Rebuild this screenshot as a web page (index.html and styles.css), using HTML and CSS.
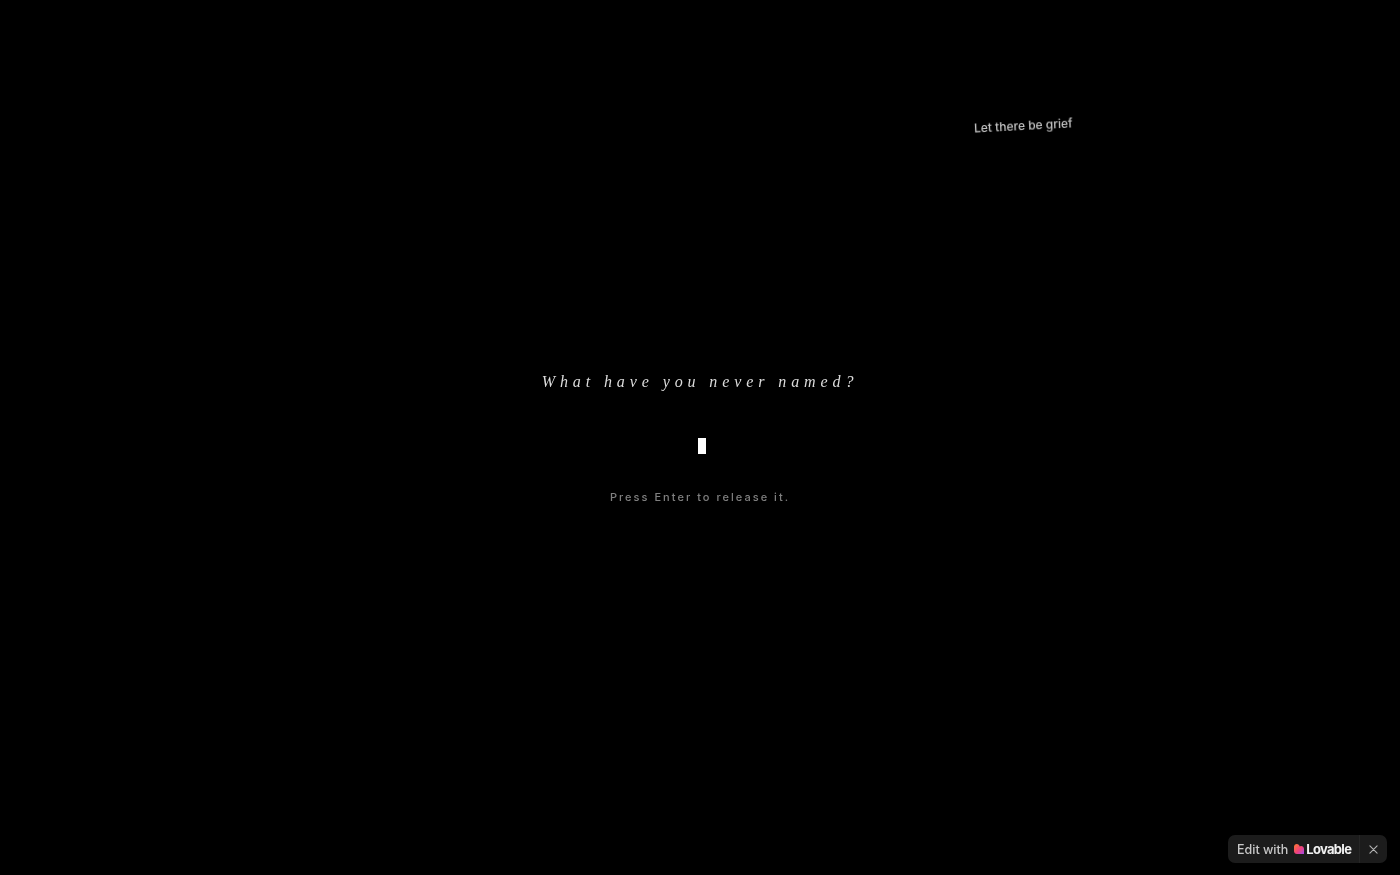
FILE: index.html
```html
<!DOCTYPE html>
<html>
<head>
  <meta name="viewport" content="width=device-width, initial-scale=1.0">
  <title>Let there be grief</title>
  <link rel="stylesheet" href="styles.css">
</head>
<body>
  <div class="floating-text">Let there be grief</div>

  <main class="prompt">
    <h1 class="prompt-question">What have you never named?</h1>
    <div class="prompt-input"><span class="cursor"></span></div>
    <p class="prompt-hint">Press Enter to release it.</p>
  </main>

  <div class="edit-badge">
    <a class="edit-link" href="#">
      <span class="edit-label">Edit with</span>
      <svg class="edit-logo" viewBox="0 0 12 12" width="10" height="10" aria-hidden="true">
        <defs>
          <linearGradient id="heart" x1="0" y1="0" x2="1" y2="1">
            <stop offset="0" stop-color="#ff7a2f"/>
            <stop offset="0.55" stop-color="#f0427a"/>
            <stop offset="1" stop-color="#a24be8"/>
          </linearGradient>
        </defs>
        <path fill="url(#heart)" d="M3.4 0C5.2 0 6.6 1.3 6.8 3.1 7.2 2.7 7.8 2.5 8.4 2.5 10.4 2.5 12 4.1 12 6.1V12H3.4C1.5 12 0 10.5 0 8.6V3.4C0 1.5 1.5 0 3.4 0Z"/>
      </svg>
      <span class="edit-brand">Lovable</span>
    </a>
    <button class="edit-close" type="button" aria-label="Close">
      <svg viewBox="0 0 10 10" width="9" height="9" aria-hidden="true">
        <path d="M1 1L9 9M9 1L1 9" stroke="#b4b4b4" stroke-width="1.2" stroke-linecap="round"/>
      </svg>
    </button>
  </div>
</body>
</html>
```

FILE: styles.css
```css
html, body {
  height: 100%;
}

body {
  margin: 0;
  background-color: #000;
  color: #fff;
  font-family: Inter, "Liberation Sans", Arial, sans-serif;
  overflow: hidden;
}

.floating-text {
  position: absolute;
  left: 974px;
  top: 117px;
  font-size: 12px;
  font-weight: 500;
  line-height: 17px;
  color: #c4c4c4;
  white-space: nowrap;
  transform: rotate(-3deg);
  will-change: transform;
}

.prompt {
  display: flex;
  flex-direction: column;
  align-items: center;
  height: 100%;
  padding-top: 371px;
  box-sizing: border-box;
  will-change: transform;
}

.prompt-question {
  margin: 0;
  font-family: "Liberation Serif", "Times New Roman", serif;
  font-size: 16px;
  font-style: italic;
  font-weight: normal;
  line-height: 22px;
  letter-spacing: 4.9px;
  color: #dcdcdc;
}

.prompt-input {
  display: flex;
  justify-content: center;
  margin-top: 45px;
  padding-left: 3px;
}

.cursor {
  display: block;
  width: 8px;
  height: 16px;
  background-color: #fff;
}

.prompt-hint {
  margin: 36px 0 0;
  font-size: 11px;
  font-weight: 500;
  line-height: 14px;
  letter-spacing: 2.03px;
  color: #808080;
}

.edit-badge {
  position: fixed;
  right: 13px;
  bottom: 12px;
  display: flex;
  align-items: center;
  height: 28px;
  background-color: #1c1c1c;
  border-radius: 7px;
  will-change: transform;
}

.edit-link {
  display: flex;
  align-items: center;
  height: 100%;
  padding: 0 8px 0 9px;
  text-decoration: none;
}

.edit-label {
  font-size: 12.5px;
  font-weight: 500;
  color: #c8c8c8;
}

.edit-logo {
  margin-left: 6px;
}

.edit-brand {
  margin-left: 2px;
  font-size: 13px;
  font-weight: 700;
  letter-spacing: -0.7px;
  color: #f2f2f2;
}

.edit-close {
  display: flex;
  align-items: center;
  justify-content: center;
  width: 28px;
  height: 100%;
  padding: 0;
  background: none;
  border: none;
  border-left: 1px solid #262626;
  cursor: pointer;
}
```
